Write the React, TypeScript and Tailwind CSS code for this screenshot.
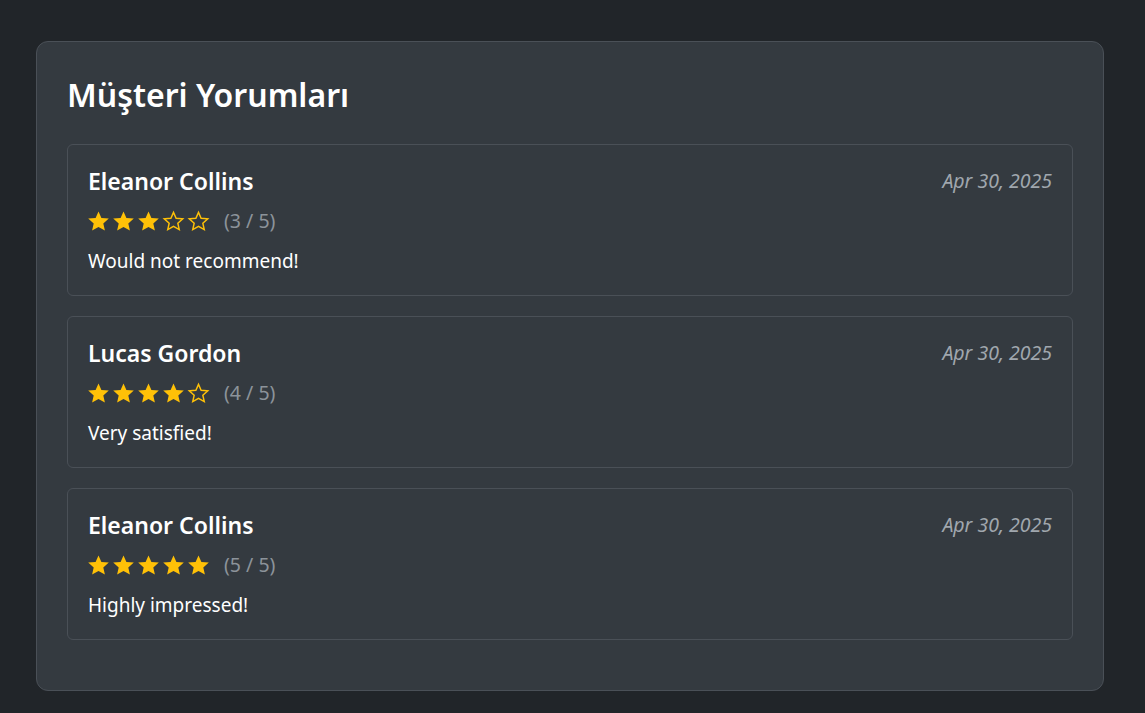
import React from 'react';

interface Review {
  name: string;
  date: string;
  rating: number;
  comment: string;
}

const reviews: Review[] = [
  { name: 'Eleanor Collins', date: 'Apr 30, 2025', rating: 3, comment: 'Would not recommend!' },
  { name: 'Lucas Gordon', date: 'Apr 30, 2025', rating: 4, comment: 'Very satisfied!' },
  { name: 'Eleanor Collins', date: 'Apr 30, 2025', rating: 5, comment: 'Highly impressed!' },
];

const STAR_POINTS =
  '10.5,0.4 13.4,7 20.8,7.6 15.3,12.5 16.9,19.6 10.5,16 4.1,19.6 5.7,12.5 0.2,7.6 7.6,7';

function Star({ filled }: { filled: boolean }) {
  return (
    <svg viewBox="0 0 21 20" className="h-5 w-[21px] overflow-visible">
      {filled ? (
        <polygon points={STAR_POINTS} fill="#ffc107" />
      ) : (
        <polygon
          points={STAR_POINTS}
          fill="none"
          stroke="#ffc107"
          strokeWidth="1.6"
          strokeLinejoin="miter"
          transform="translate(1.05 1) scale(0.9)"
        />
      )}
    </svg>
  );
}

function ReviewCard({ review }: { review: Review }) {
  return (
    <div className="rounded-md border border-[#4a5057] bg-[#343a40] px-5 pt-[21px] pb-5">
      <div className="flex items-center justify-between">
        <h5 className="text-[23px] font-semibold leading-[30px] text-white">{review.name}</h5>
        <span className="text-[19.5px] italic leading-[30px] text-[#a0a7ae]">{review.date}</span>
      </div>
      <div className="mt-[13px] flex h-6 items-center">
        <div className="flex gap-1">
          {[1, 2, 3, 4, 5].map(i => (
            <Star key={i} filled={i <= review.rating} />
          ))}
        </div>
        <span className="ml-[15px] text-[19.5px] leading-6 text-[#8c939a]">({review.rating} / 5)</span>
      </div>
      <p className="mt-[14px] text-[19px] leading-7 text-white">{review.comment}</p>
    </div>
  );
}

export default function App() {
  return (
    <div
      className="min-h-screen bg-[#212529] pt-[41px] pb-[23px] pl-[36px] pr-[41px]"
      style={{ fontFamily: '"Noto Sans", "Open Sans", sans-serif' }}
    >
      <div className="rounded-xl border border-[#4a5057] bg-[#343a40] px-[30px] pt-[33px] pb-[50px]">
        <h2 className="mb-[29px] text-[32px] font-semibold leading-[40px] text-white">Müşteri Yorumları</h2>
        <div className="flex flex-col gap-5">
          {reviews.map((r, i) => (
            <ReviewCard key={i} review={r} />
          ))}
        </div>
      </div>
    </div>
  );
}
